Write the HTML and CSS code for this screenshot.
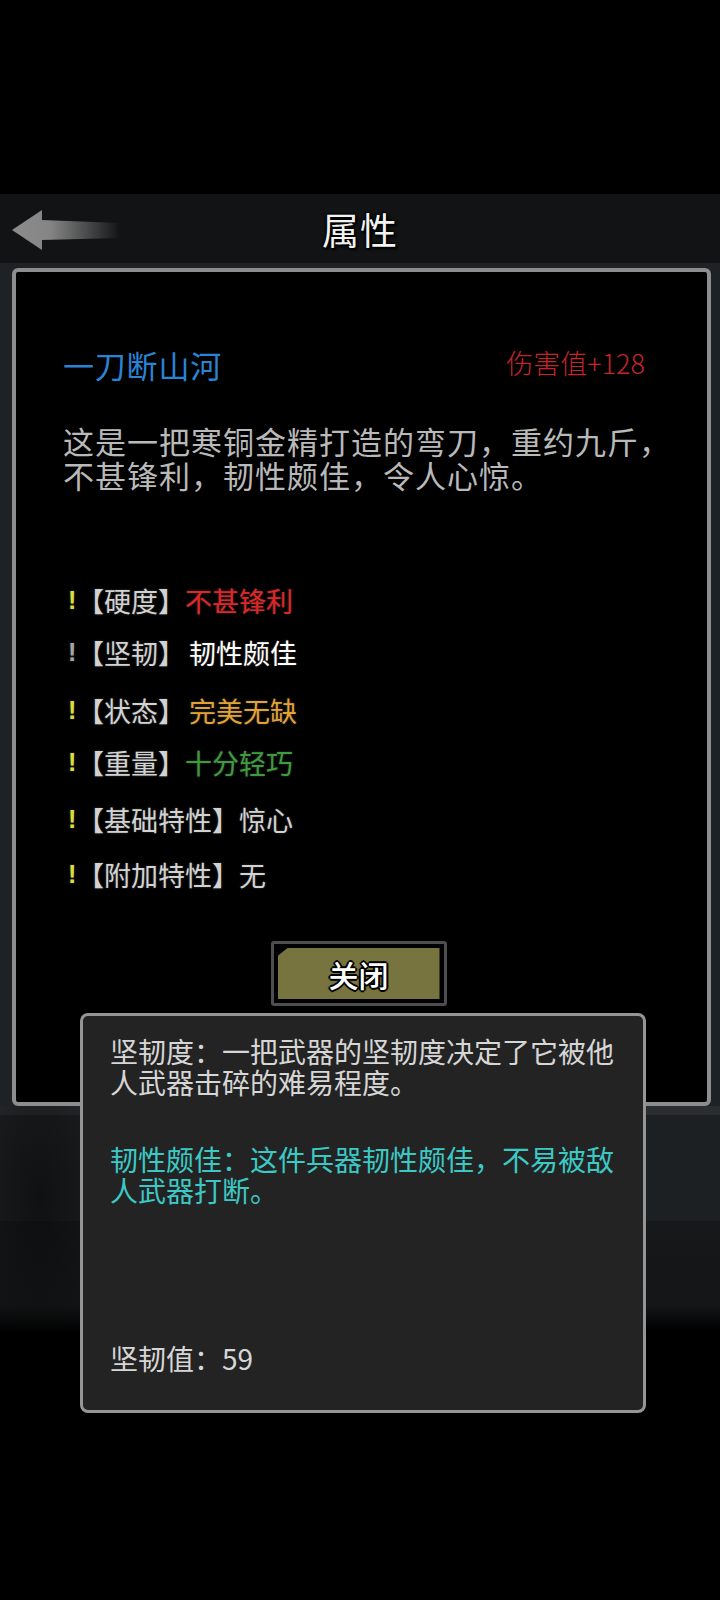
FILE: index.html
```html
<!DOCTYPE html>
<html lang="zh">
  <head>
    <meta charset="UTF-8" />
    <meta name="viewport" content="width=device-width, initial-scale=1.0" />
    <title>属性</title>
    <link rel="stylesheet" href="styles.css">
  </head>

  <body>
    <div class="screen">
      <div class="top-space"></div>

      <div class="header">
        <div class="back">
          <svg width="112" height="46" viewBox="0 0 112 46">
            <defs>
              <linearGradient id="shaft" x1="0" y1="0" x2="1" y2="0">
                <stop offset="0" stop-color="#8c8c8c" />
                <stop offset="0.35" stop-color="#858585" />
                <stop offset="1" stop-color="#8c8c8c" stop-opacity="0" />
              </linearGradient>
            </defs>
            <path d="M2 23 L32 3 L32 13 L110 16 L110 31 L32 33 L32 43 Z" fill="url(#shaft)" />
          </svg>
        </div>
        <h1 class="title">属性</h1>
        <div></div>
      </div>

      <div class="stage">
        <div class="panel">
          <div class="item-head">
            <span class="item-name">一刀断山河</span>
            <span class="damage">伤害值+128</span>
          </div>
          <p class="desc">这是一把寒铜金精打造的弯刀，重约九斤，<br>不甚锋利，韧性颇佳，令人心惊。</p>

          <ul class="attrs">
            <li><span class="mark">!</span><span class="label">【硬度】</span><span class="val red">不甚锋利</span></li>
            <li><span class="mark dim">!</span><span class="label">【坚韧】</span><span class="val white spaced">韧性颇佳</span></li>
            <li class="gap-6"><span class="mark">!</span><span class="label">【状态】</span><span class="val orange spaced">完美无缺</span></li>
            <li><span class="mark">!</span><span class="label">【重量】</span><span class="val green">十分轻巧</span></li>
            <li class="gap-5"><span class="mark">!</span><span class="label">【基础特性】</span><span class="val">惊心</span></li>
            <li class="gap-3"><span class="mark">!</span><span class="label">【附加特性】</span><span class="val">无</span></li>
          </ul>

          <div class="btn-container">
            <button class="close-btn"><span>关闭</span></button>
          </div>
        </div>
      </div>

      <div class="scene"></div>

      <div class="tooltip">
        <p class="tip-text">坚韧度：一把武器的坚韧度决定了它被他<br>人武器击碎的难易程度。</p>
        <p class="tip-text cyan">韧性颇佳：这件兵器韧性颇佳，不易被敌<br>人武器打断。</p>
        <p class="tip-text value">坚韧值：59</p>
      </div>
    </div>
  </body>
</html>
```

FILE: styles.css
```css
body {
  margin: 0;
  background-color: #000000;
  font-family: "Noto Sans CJK SC", "Noto Sans", sans-serif;
  color: #cfcfcf;
}

.screen {
  position: relative;
  width: 720px;
  height: 1600px;
  overflow: hidden;
  background-color: #000000;
}

.top-space {
  height: 194px;
}

.header {
  height: 69px;
  background-color: #111315;
  display: grid;
  grid-template-columns: 1fr auto 1fr;
  align-items: center;
}

.back {
  padding-left: 10px;
  padding-top: 2px;
  display: flex;
  align-items: center;
}

.title {
  margin: 0;
  font-size: 37px;
  font-weight: 400;
  color: #f2f2f2;
  letter-spacing: 1px;
  text-shadow: 0 0 2px #000, 1px 1px 2px #000, -1px -1px 2px #000, 2px 2px 3px #000;
}

.stage {
  background-color: #1e2225;
  padding: 5px 9px 0 12px;
}

.panel {
  background-color: #000000;
  border: 4px solid #8d8d8d;
  border-radius: 6px;
  padding: 72px 0 96px 0;
}

.item-head {
  display: flex;
  justify-content: space-between;
  align-items: center;
  height: 40px;
  padding-left: 47px;
  padding-right: 62px;
}

.item-name {
  font-size: 31px;
  letter-spacing: 0.8px;
  color: #2a84d6;
}

.damage {
  font-size: 27px;
  color: #c4252a;
  font-weight: 300;
  margin-top: -4px;
}

.desc {
  margin: 40px 0 0 47px;
  font-size: 31px;
  letter-spacing: 1px;
  line-height: 34px;
  color: #b9b9b9;
}

.attrs {
  list-style: none;
  margin: 82px 0 0 0;
  padding: 0 0 0 52px;
}

.attrs li {
  height: 52px;
  display: flex;
  align-items: center;
  font-size: 27px;
  text-shadow: 0 0 2px #2a2a2a, 0 0 3px #222;
}

.attrs li.gap-6 {
  margin-top: 6px;
}

.attrs li.gap-5 {
  margin-top: 5px;
}

.attrs li.gap-3 {
  margin-top: 3px;
}

.mark {
  width: 9px;
  color: #dcdc3a;
  font-weight: 700;
  font-family: "Liberation Sans", sans-serif;
  font-size: 25px;
}

.mark.dim {
  color: #a5a5a5;
}

.label {
  color: #d2d2d2;
}

.val {
  color: #d2d2d2;
}

.val.spaced {
  margin-left: 4px;
}

.red {
  color: #e42424;
}

.white {
  color: #ffffff;
}

.orange {
  color: #e3a232;
}

.green {
  color: #3d9c3d;
}

.btn-container {
  display: flex;
  justify-content: center;
  margin-top: 41px;
  padding-right: 6px;
}

.close-btn {
  width: 176px;
  height: 65px;
  padding: 4px;
  border: 3px solid #4e4e4e;
  border-radius: 3px;
  background-color: #000000;
  cursor: pointer;
}

.close-btn span {
  display: flex;
  align-items: center;
  justify-content: center;
  height: 100%;
  background-color: #77743f;
  clip-path: polygon(10px 0, 100% 0, 100% 100%, 0 100%, 0 8px);
  font-family: "Noto Sans CJK SC", sans-serif;
  font-size: 30px;
  font-weight: 500;
  color: #ffffff;
  text-shadow: 2px 0 0 #000, -2px 0 0 #000, 0 2px 0 #000, 0 -2px 0 #000,
    1px 1px 1px #000, -1px -1px 1px #000, 1px -1px 1px #000, -1px 1px 1px #000;
}

.scene {
  height: 225px;
  background:
    radial-gradient(ellipse 90px 200px at 40px 90px, rgba(10, 10, 10, 0.7), rgba(10, 10, 10, 0)),
    linear-gradient(to bottom, #2a2e31 0, #2a2e31 9px, #1d2023 9px, #1d2023 115px, #16181a 115px, #131517 200px, #000 225px);
}

.tooltip {
  position: absolute;
  left: 80px;
  top: 1013px;
  width: 566px;
  height: 400px;
  box-sizing: border-box;
  background-color: #232323;
  border: 3px solid #959595;
  border-radius: 8px;
  padding: 20px 0 0 27px;
}

.tip-text {
  margin: 0;
  font-size: 28px;
  line-height: 31px;
  color: #d6d6d6;
}

.tip-text.cyan {
  margin-top: 46px;
  color: #3cc9c6;
}

.tip-text.value {
  margin-top: 137px;
}
```
